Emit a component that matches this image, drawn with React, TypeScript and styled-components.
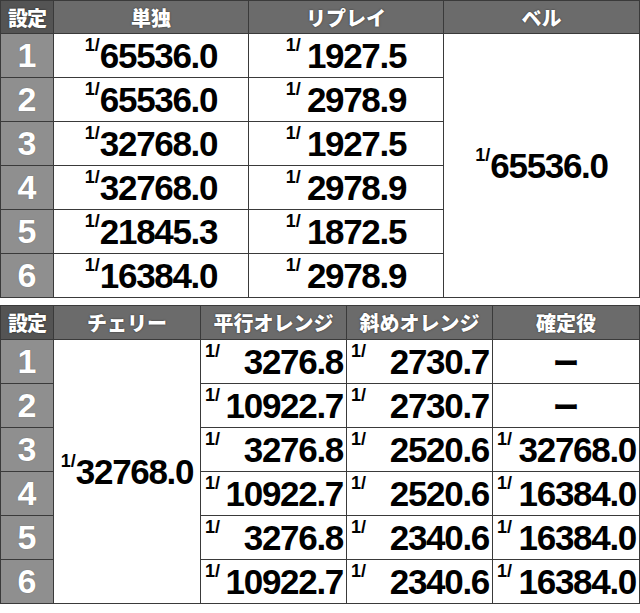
import React from 'react';
import styled, { createGlobalStyle } from 'styled-components';

const GlobalStyle = createGlobalStyle`
  html, body {
    margin: 0;
    padding: 0;
    background: #fff;
  }
  body {
    font-family: "Liberation Sans", Arial, "Noto Sans CJK JP", sans-serif;
  }
`;

const Page = styled.div`
  width: 640px;
  display: flex;
  flex-direction: column;
  gap: 7px;
`;

const Table = styled.table`
  width: 639px;
  border-collapse: collapse;
  table-layout: fixed;
`;

const Head = styled.th<{ $dark?: boolean }>`
  height: 32px;
  padding: 0;
  background: ${(p) => (p.$dark ? '#545454' : '#6b6b6b')};
  border: 1px solid #3a3a3a;
  color: #fff;
  font-family: "Noto Sans CJK JP", "Liberation Sans", sans-serif;
  font-weight: 900;
  font-size: 20px;
  letter-spacing: ${(p) => (p.$dark ? '-1px' : '0')};
  text-shadow: 0 0 2px rgba(0, 0, 0, 0.6);
  text-align: center;
  white-space: nowrap;
`;

const Row = styled.tr<{ $h: number }>`
  height: ${(p) => p.$h}px;
`;

const SetCell = styled.td`
  padding: 0;
  background: #8f8f8f;
  border: 1px solid #3a3a3a;
  color: #fff;
  font-family: "Liberation Sans", Arial, sans-serif;
  font-weight: 700;
  font-size: 34px;
  text-align: center;
  text-shadow: 0 0 1px rgba(0, 0, 0, 0.4);
`;

const ValueCell = styled.td`
  padding: 0;
  background: #fff;
  border: 1px solid #3a3a3a;
  vertical-align: middle;
`;

const Value = styled.div<{ $mode: 'center' | 'split' }>`
  display: flex;
  align-items: flex-start;
  justify-content: ${(p) => (p.$mode === 'split' ? 'space-between' : 'center')};
  padding: ${(p) => (p.$mode === 'split' ? '0 3px 0 4px' : '0')};
  color: #000;
  font-family: "Liberation Sans", Arial, sans-serif;
  font-weight: 700;
`;

const Frac = styled.span<{ $gap?: number }>`
  font-size: 18px;
  line-height: 1;
  margin-top: -2px;
  margin-right: ${(p) => p.$gap ?? 0}px;
  letter-spacing: 0;
`;

const Num = styled.span`
  font-size: 35px;
  line-height: 1;
  letter-spacing: -1.3px;
`;

const Dash = styled.span`
  display: block;
  text-align: center;
  font-family: "Noto Sans CJK JP", sans-serif;
  font-weight: 900;
  font-size: 26px;
  color: #000;
`;

const Prob = ({ v, mode = 'center', gap }: { v: string; mode?: 'center' | 'split'; gap?: number }) => (
  <Value $mode={mode}>
    <Frac $gap={gap}>1/</Frac>
    <Num>{v}</Num>
  </Value>
);

const top = [
  ['65536.0', '1927.5'],
  ['65536.0', '2978.9'],
  ['32768.0', '1927.5'],
  ['32768.0', '2978.9'],
  ['21845.3', '1872.5'],
  ['16384.0', '2978.9'],
];

const bottom = [
  ['3276.8', '2730.7', ''],
  ['10922.7', '2730.7', ''],
  ['3276.8', '2520.6', '32768.0'],
  ['10922.7', '2520.6', '16384.0'],
  ['3276.8', '2340.6', '16384.0'],
  ['10922.7', '2340.6', '16384.0'],
];

export default function App() {
  return (
    <Page>
      <GlobalStyle />
      <Table>
        <colgroup>
          <col style={{ width: 53 }} />
          <col style={{ width: 195 }} />
          <col style={{ width: 195 }} />
          <col style={{ width: 196 }} />
        </colgroup>
        <thead>
          <tr>
            <Head $dark>設定</Head>
            <Head>単独</Head>
            <Head>リプレイ</Head>
            <Head>ベル</Head>
          </tr>
        </thead>
        <tbody>
          {top.map((r, i) => (
            <Row $h={44} key={i}>
              <SetCell>{i + 1}</SetCell>
              <ValueCell>
                <Prob v={r[0]} />
              </ValueCell>
              <ValueCell>
                <Prob v={r[1]} gap={6} />
              </ValueCell>
              {i === 0 && (
                <ValueCell rowSpan={6}>
                  <Prob v="65536.0" />
                </ValueCell>
              )}
            </Row>
          ))}
        </tbody>
      </Table>
      <Table>
        <colgroup>
          <col style={{ width: 53 }} />
          <col style={{ width: 147 }} />
          <col style={{ width: 146 }} />
          <col style={{ width: 146 }} />
          <col style={{ width: 147 }} />
        </colgroup>
        <thead>
          <tr style={{ height: 34 }}>
            <Head $dark>設定</Head>
            <Head>チェリー</Head>
            <Head>平行オレンジ</Head>
            <Head>斜めオレンジ</Head>
            <Head>確定役</Head>
          </tr>
        </thead>
        <tbody>
          {bottom.map((r, i) => (
            <Row $h={44} key={i}>
              <SetCell>{i + 1}</SetCell>
              {i === 0 && (
                <ValueCell rowSpan={6}>
                  <Prob v="32768.0" />
                </ValueCell>
              )}
              <ValueCell>
                <Prob v={r[0]} mode="split" />
              </ValueCell>
              <ValueCell>
                <Prob v={r[1]} mode="split" />
              </ValueCell>
              <ValueCell>
                {r[2] ? <Prob v={r[2]} mode="split" /> : <Dash>ー</Dash>}
              </ValueCell>
            </Row>
          ))}
        </tbody>
      </Table>
    </Page>
  );
}
